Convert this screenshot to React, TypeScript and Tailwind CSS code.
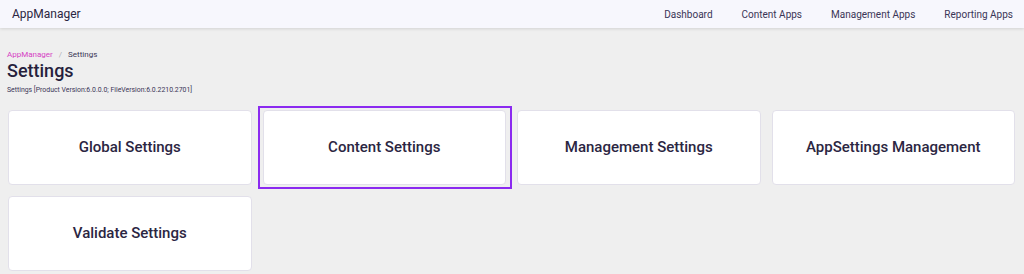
import React from "react";

const cards = [
  { label: "Global Settings", active: false },
  { label: "Content Settings", active: true },
  { label: "Management Settings", active: false },
  { label: "AppSettings Management", active: false },
  { label: "Validate Settings", active: false },
];

export default function App() {
  return (
    <div
      className="w-[1024px] h-[274px] overflow-hidden bg-[#efefef] text-[#2b2642]"
      style={{ fontFamily: "Roboto, 'Noto Sans', sans-serif" }}
    >
      <header className="h-[28px] bg-[#f7f7fd] shadow-[0_1px_3px_rgba(0,0,0,0.12)] flex items-center justify-between pl-[12px] pr-[11px] relative">
        <div className="text-[12px] text-[#2b2642]">AppManager</div>
        <nav className="flex items-center gap-[29px] text-[10px] text-[#3a3556]">
          <span>Dashboard</span>
          <span>Content Apps</span>
          <span>Management Apps</span>
          <span>Reporting Apps</span>
        </nav>
      </header>
      <div className="pl-[7px] pt-[21px]">
        <div className="flex items-center gap-[6px] text-[8px] leading-[12px]">
          <span className="text-[#d63fc4]">AppManager</span>
          <span className="text-[#b0b0b8]">/</span>
          <span className="text-[#3a3556]">Settings</span>
        </div>
        <h1 className="text-[18px] font-medium leading-[24px] mt-[-2px] text-[#261f3d]">Settings</h1>
        <div className="text-[6.9px] leading-[10px] mt-[2px] text-[#3a3556]">
          Settings [Product Version:6.0.0.0; FileVersion:6.0.2210.2701]
        </div>
      </div>
      <div className="grid grid-cols-4 gap-[11px] pl-[8px] pr-[9px] mt-[15px]">
        {cards.map((c) => (
          <div key={c.label} className="relative">
            <div className="h-[75px] bg-white rounded-[4px] border border-[#e2e0ea] flex items-center justify-center text-[15px] font-medium text-[#2b2642]">
              {c.label}
            </div>
            {c.active && (
              <span className="absolute -left-[5px] -right-[6px] -top-[4px] -bottom-[4px] border-2 border-[#8b2af0] pointer-events-none" />
            )}
          </div>
        ))}
      </div>
    </div>
  );
}
